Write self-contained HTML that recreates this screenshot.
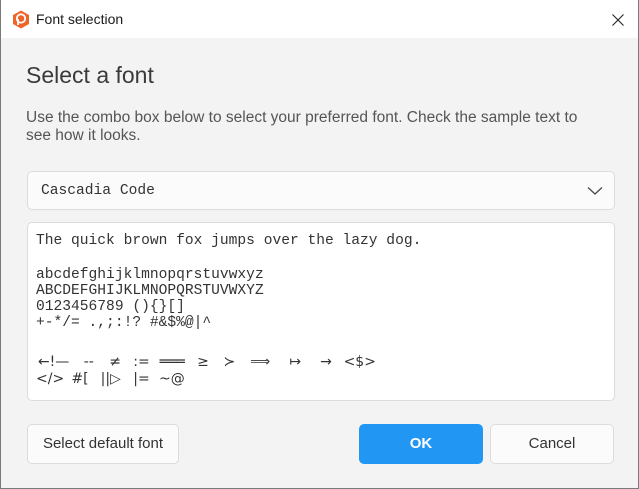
<!DOCTYPE html>
<html><head><meta charset="utf-8"><style>
*{box-sizing:border-box;margin:0;padding:0}
body{width:639px;height:489px;overflow:hidden;background:#f3f3f3;font-family:"Liberation Sans",sans-serif;position:relative}
.win{position:absolute;left:0;top:0;width:639px;height:489px;border:1px solid #7a7a7a;border-top:none;background:#f3f3f3}
.title{position:absolute;left:0;top:0;width:637px;height:38px;background:#fff}
.title .t{position:absolute;left:35px;top:11px;font-size:14px;color:#1a1a1a}
.close{position:absolute;left:610px;top:13px}
h1{position:absolute;left:25px;top:62px;font-size:23px;font-weight:normal;color:#3a3a3a}
.desc{position:absolute;left:25px;top:109px;width:600px;font-size:15.5px;line-height:18px;color:#555;white-space:nowrap}
.box{position:absolute;background:#fbfbfb;border:1px solid #dcdcdc;border-radius:5px}
.combo{left:26px;top:171px;width:588px;height:39px}
.combo span{position:absolute;left:13px;top:11px;font-family:"Liberation Mono",monospace;font-size:14.6px;color:#333}
.prev{left:26px;top:222px;width:588px;height:179px;background:#fff}
.l{position:absolute;left:8px;font-family:"Liberation Mono","DejaVu Sans Mono",monospace;font-size:14.6px;line-height:16px;color:#333;white-space:pre}
.g{display:inline-block;text-align:center;font-family:"DejaVu Sans",sans-serif;font-size:14px}
.btn{position:absolute;top:424px;height:40px;border-radius:5px;font-size:15px;text-align:center;line-height:38px;color:#333}
</style></head><body><div class="win">
<div class="title">
<svg style="position:absolute;left:11px;top:10px" width="18" height="19" viewBox="0 0 18 19"><path d="M9 0.5L17 5v9l-8 4.5L1 14V5z" fill="#f0642a"/><circle cx="9" cy="8.5" r="4.2" fill="none" stroke="#fff" stroke-width="1.8"/><path d="M6 9v6" stroke="#fff" stroke-width="1.8"/></svg>
<div class="t">Font selection</div>
<svg class="close" width="14" height="14" viewBox="0 0 14 14"><path d="M1.5 1.5L12.5 12.5M12.5 1.5L1.5 12.5" stroke="#222" stroke-width="1.1"/></svg>
</div>
<h1>Select a font</h1>
<div class="desc">Use the combo box below to select your preferred font. Check the sample text to<br>see how it looks.</div>
<div class="box combo"><span>Cascadia Code</span>
<svg style="position:absolute;left:559px;top:14px" width="16" height="10" viewBox="0 0 16 10"><path d="M1 1.5L8 8L15 1.5" fill="none" stroke="#444" stroke-width="1.2"/></svg></div>
<div class="box prev">
<div class="l" style="top:10px">The quick brown fox jumps over the lazy dog.</div>
<div class="l" style="top:44px">abcdefghijklmnopqrstuvwxyz</div>
<div class="l" style="top:60px">ABCDEFGHIJKLMNOPQRSTUVWXYZ</div>
<div class="l" style="top:76px">0123456789 (){}[]</div>
<div class="l" style="top:92px">+-*/= .,;:!? #&amp;$%@|^</div>
<div class="l" style="top:131px"><span class="g" style="width:35.2px">←!—</span> <span class="g" style="width:17.6px">--</span> <span class="g" style="width:17.6px">≠</span> <span class="g" style="width:17.6px">:=</span> <span class="g" style="width:26.4px">═══</span> <span class="g" style="width:17.6px">≥</span> <span class="g" style="width:17.6px">≻</span> <span class="g" style="width:26.4px">⟹</span> <span class="g" style="width:26.4px">↦</span> <span class="g" style="width:17.6px">→</span> <span class="g" style="width:26.4px">&lt;$&gt;</span></div>
<div class="l" style="top:148px"><span class="g" style="width:26.4px">&lt;/&gt;</span> <span class="g" style="width:17.6px">#[</span> <span class="g" style="width:26.4px">||▷</span> <span class="g" style="width:17.6px">|=</span> <span class="g" style="width:17.6px">~@</span></div>
</div>
<div class="btn" style="left:26px;width:152px;background:#fbfbfb;border:1px solid #dcdcdc">Select default font</div>
<div class="btn" style="left:358px;width:124px;background:#2196f3;color:#fff;font-weight:bold;line-height:40px">OK</div>
<div class="btn" style="left:489px;width:124px;background:#fbfbfb;border:1px solid #dcdcdc">Cancel</div>
</div></body></html>
